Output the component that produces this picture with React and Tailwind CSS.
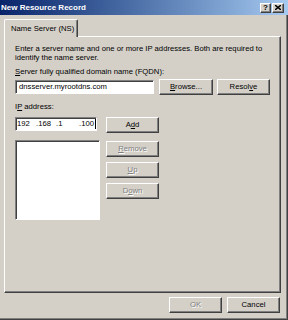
export default function App() {
  const raised =
    "border border-t-white border-l-white border-r-[#404040] border-b-[#404040] shadow-[inset_-1px_-1px_0_#808080] bg-[#d4d0c8]";
  const sunken =
    "border border-t-[#808080] border-l-[#808080] border-r-white border-b-white shadow-[inset_1px_1px_0_#404040] bg-white";
  const btn = `${raised} h-[16px] w-[53px] flex items-center justify-center text-[7.7px] leading-none text-black`;
  const dis = `${raised} h-[16px] w-[53px] flex items-center justify-center text-[7.7px] leading-none text-[#808080] [text-shadow:1px_1px_0_#fff]`;

  return (
    <div className="w-[288px] h-[320px] bg-[#d4d0c8] flex flex-col overflow-hidden shadow-[inset_-1px_-1px_0_#404040,inset_-2px_-2px_0_#808080] font-['Liberation_Sans',Arial,sans-serif] text-black">
      {/* Title bar */}
      <div className="h-[15px] flex items-center justify-between bg-gradient-to-r from-[#0a246a] to-[#a6caf0] pl-[1px] pr-[4px]">
        <span className="text-white font-bold text-[8px] leading-none">New Resource Record</span>
        <div className="flex items-center gap-[1px]">
          <div className={`${raised} w-[11px] h-[10px] flex items-center justify-center text-[8px] font-bold leading-none`}>?</div>
          <div className={`${raised} w-[12px] h-[10px] flex items-center justify-center`}>
            <svg width="6" height="5" viewBox="0 0 6 5">
              <path d="M0 0 L6 5 M6 0 L0 5" stroke="#000" strokeWidth="1.4" />
            </svg>
          </div>
        </div>
      </div>

      {/* Tab */}
      <div className="pl-[4px] pt-[4px] flex">
        <div className="relative z-10 -mb-[1px] h-[18px] w-[74px] bg-[#d4d0c8] border-t border-l border-t-white border-l-white border-r border-r-[#404040] rounded-tl-[2px] rounded-tr-[2px] shadow-[inset_-1px_0_0_#808080] flex items-center pl-[6px] text-[7.7px] leading-none">
          Name Server (NS)
        </div>
      </div>

      {/* Panel */}
      <div className="ml-[4px] w-[277px] h-[257px] border border-t-white border-l-white border-r-[#404040] border-b-[#404040] shadow-[inset_-1px_-1px_0_#808080] flex flex-col pl-[10px] pt-[7px] text-[7.7px] leading-[9px]">
        <div>
          Enter a server name and one or more IP addresses. Both are required to
          <br />
          identify the name server.
        </div>
        <div className="mt-[5px]">
          <span className="underline">S</span>erver fully qualified domain name (FQDN):
        </div>
        <div className="mt-[3px] flex items-center">
          <div className={`${sunken} w-[139px] h-[14px] flex items-center pl-[3px] text-[7.7px] leading-none`}>
            dnsserver.myrootdns.com
          </div>
          <div className={`${btn} ml-[5px] w-[54px]`}>
            <span>
              <span className="underline">B</span>rowse...
            </span>
          </div>
          <div className={`${btn} ml-[4px]`}>
            <span>
              Resol<span className="underline">v</span>e
            </span>
          </div>
        </div>
        <div className="mt-[7px]">
          I<span className="underline">P</span> address:
        </div>
        <div className="mt-[6px] flex items-start">
          <div className={`${sunken} w-[82px] h-[14px] flex items-center pl-[1px] text-[7.7px] leading-none`}>
            <span className="w-[19px]">192</span>
            <span className="w-[20px]">.168</span>
            <span className="w-[23px]">.1</span>
            <span>.100</span>
            <span className="ml-[1px] w-[1px] h-[10px] bg-black"></span>
          </div>
          <div className={`${btn} ml-[9px]`}>
            <span>
              A<span className="underline">d</span>d
            </span>
          </div>
        </div>
        <div className="mt-[7px] flex items-start">
          <div className={`${sunken} w-[85px] h-[80px]`}></div>
          <div className="ml-[6px] mt-[1px] flex flex-col gap-[5px]">
            <div className={dis}>
              <span>
                <span className="underline">R</span>emove
              </span>
            </div>
            <div className={dis}>
              <span>
                <span className="underline">U</span>p
              </span>
            </div>
            <div className={dis}>
              <span>
                D<span className="underline">o</span>wn
              </span>
            </div>
          </div>
        </div>
      </div>

      {/* Bottom buttons */}
      <div className="mt-[4px] flex justify-end gap-[5px] pr-[8px]">
        <div className={dis}>OK</div>
        <div className={btn}>Cancel</div>
      </div>
    </div>
  );
}
